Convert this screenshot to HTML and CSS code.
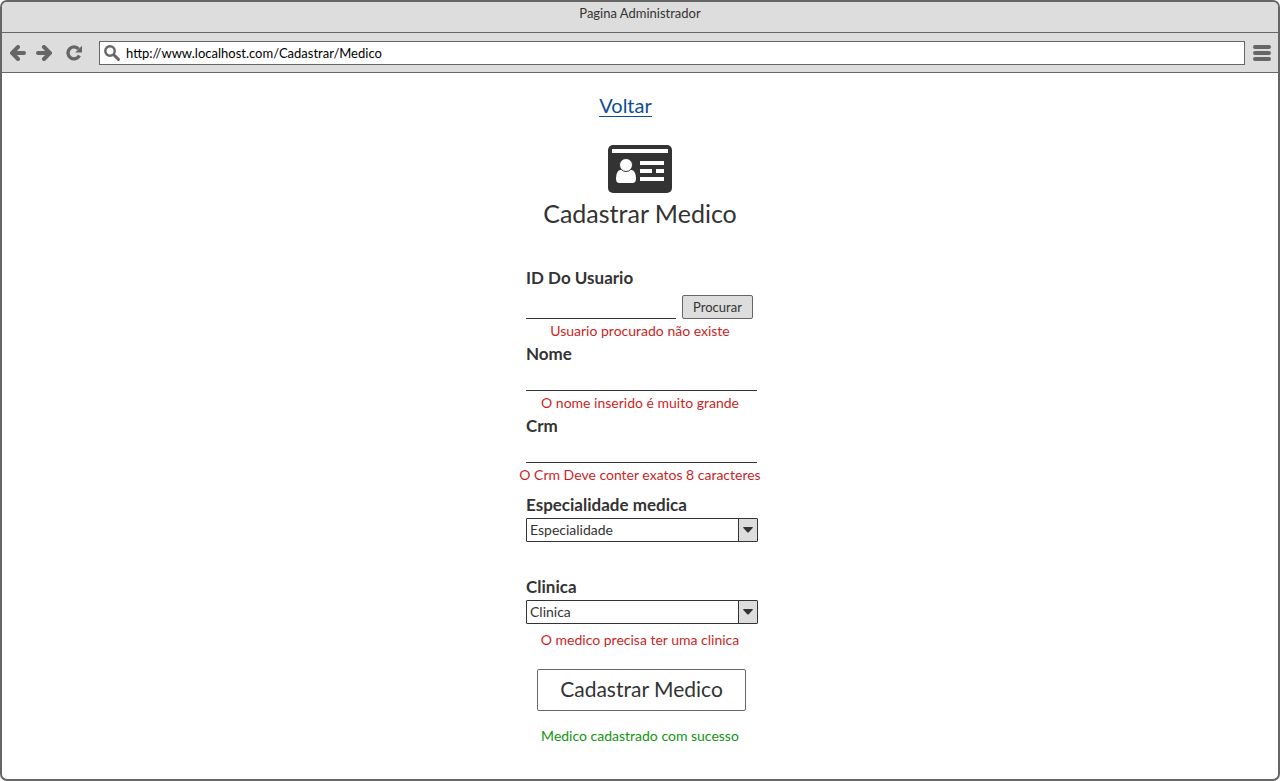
FILE: index.html
```html
<!DOCTYPE html>
<html lang="pt-BR">
<head>
<meta charset="utf-8">
<title>Pagina Administrador</title>
<link rel="stylesheet" href="styles.css">
</head>
<body>
<div class="window">
  <header class="titlebar">Pagina Administrador</header>
  <div class="toolbar">
    <button class="tool" type="button" aria-label="Voltar página"><svg width="16" height="16" viewBox="0 0 16 16"><path d="M8 2 2 8l6 6M3 8h11" fill="none" stroke="currentColor" stroke-width="4" stroke-linecap="round"/></svg></button>
    <button class="tool" type="button" aria-label="Avançar página"><svg width="16" height="16" viewBox="0 0 16 16"><path d="m8 2 6 6-6 6M13 8H2" fill="none" stroke="currentColor" stroke-width="4" stroke-linecap="round"/></svg></button>
    <button class="tool reload" type="button" aria-label="Recarregar"><svg width="16" height="16" viewBox="0 0 16 16"><path d="M12.6 4A6 6 0 1 0 13.4 10.6" fill="none" stroke="currentColor" stroke-width="3.4"/><path d="M16 .8v6.700H9.200z" fill="currentColor"/></svg></button>
    <div class="address">
      <svg width="16" height="16" viewBox="0 0 16 16" aria-hidden="true"><circle cx="6" cy="6" r="4.7" fill="none" stroke="currentColor" stroke-width="2.4"/><path d="m10 10 4.4 4.4" stroke="currentColor" stroke-width="3" stroke-linecap="round"/></svg>
      <input class="url" type="text" aria-label="Endereço" value="http://www.localhost.com/Cadastrar/Medico">
    </div>
    <button class="tool menu" type="button" aria-label="Menu"><svg width="18" height="16" viewBox="0 0 18 16"><path d="M2 2h14M2 8h14M2 14h14" stroke="currentColor" stroke-width="4" stroke-linecap="round"/></svg></button>
  </div>
  <main class="page">
    <a class="back" href="#">Voltar</a>
    <svg class="card-icon" width="64" height="48" viewBox="0 0 64 48" aria-hidden="true">
      <rect width="64" height="48" rx="5" fill="#333"/>
      <path d="M4 4h56v4H4zM32 16h24v4H32zM32 24h12v4H32zM48 24h8v4h-8zM32 32h24v4H32z" fill="#fff"/>
      <path d="M12.500 25C9.500 25 8 29.500 8 34c0 2.600 1.300 4 3.500 4h13c2.200 0 3.500-1.400 3.500-4 0-4.500-1.500-9-4.500-9z" fill="#fff"/>
      <circle cx="18" cy="20" r="6.500" fill="#fff" stroke="#333" stroke-width="1"/>
    </svg>
    <h1 class="title">Cadastrar Medico</h1>
    <form class="form">
      <label class="label" for="id">ID Do Usuario</label>
      <div class="search">
        <input class="line" id="id" type="text">
        <button class="find" type="button">Procurar</button>
      </div>
      <p class="message">Usuario procurado não existe</p>
      <label class="label" for="nome">Nome</label>
      <input class="line" id="nome" type="text">
      <p class="message">O nome inserido é muito grande</p>
      <label class="label" for="crm">Crm</label>
      <input class="line" id="crm" type="text">
      <p class="message">O Crm Deve conter exatos 8 caracteres</p>
      <label class="label first-choice" for="esp">Especialidade medica</label>
      <div class="choice">
        <select class="select" id="esp"><option>Especialidade</option></select>
        <span class="arrow"><svg width="10" height="6" viewBox="0 0 10 6"><path d="M.7 0h8.600q1 0 .3.900L6 5q-1 1-2 0L.4.900Q-.3 0 .7 0z" fill="currentColor"/></svg></span>
      </div>
      <label class="label next-choice" for="clinica">Clinica</label>
      <div class="choice">
        <select class="select" id="clinica"><option>Clinica</option></select>
        <span class="arrow"><svg width="10" height="6" viewBox="0 0 10 6"><path d="M.7 0h8.600q1 0 .3.900L6 5q-1 1-2 0L.4.900Q-.3 0 .7 0z" fill="currentColor"/></svg></span>
      </div>
      <p class="message spaced">O medico precisa ter uma clinica</p>
      <button class="submit" type="button">Cadastrar Medico</button>
      <p class="message success">Medico cadastrado com sucesso</p>
    </form>
  </main>
</div>
</body>
</html>
```
FILE: styles.css
```css
* { box-sizing: border-box; }
body { margin: 0; background: #fff; color: #333; font: 13px/24px Lato, "Open Sans", sans-serif; }
button, input, select { font: inherit; color: inherit; margin: 0; padding: 0; }
svg { display: block; }
.window { min-height: 100vh; border: 2px solid #666; border-radius: 7px; overflow: hidden; display: flex; flex-direction: column; }
.titlebar { height: 31px; background: #ddd; border-bottom: 1px solid #666; text-align: center; line-height: 22px; }
.toolbar { display: flex; align-items: center; gap: 10px; height: 40px; padding: 0 7px 0 8px; background: #ddd; border-bottom: 1px solid #666; color: #666; }
.tool { border: 0; background: none; color: #666; }
.reload { margin: 0 7px 0 4px; }
.menu { margin-left: -2px; }
.address { flex: 1; display: flex; align-items: center; gap: 6px; height: 24px; padding-left: 4px; border: 1px solid #666; background: #fff; }
.url { flex: 1; min-width: 0; height: 22px; border: 0; outline: 0; color: #000; }
.page { display: flex; flex-direction: column; align-items: center; padding: 22px 0 30px; }
.back { margin-right: 29px; border-bottom: 1px solid #0d4f92; color: #0d4f92; font-size: 20px; line-height: 21px; text-decoration: none; }
.card-icon { margin-top: 28px; }
.title { margin: 6px 0 0; font-size: 25px; line-height: 28px; font-weight: 400; }
.form { display: flex; flex-direction: column; width: 240px; margin-top: 40px; }
.label { margin: 0 0 2px 6px; font-size: 17px; line-height: 22px; font-weight: 700; }
.line { height: 24px; margin: 0 3px 0 6px; border: 0; border-bottom: 1px solid #333; outline: 0; background: none; }
.search { display: flex; gap: 6px; margin: 4px 7px 0 6px; }
.search .line { flex: 1; min-width: 0; margin: 0; }
.find { width: 71px; border: 1px solid #666; border-radius: 2px; background: #ddd; line-height: 20px; }
.message { margin: 0 -4px; text-align: center; white-space: nowrap; font-size: 14px; color: #cc1f1f; }
.first-choice { margin-top: 7px; }
.next-choice { margin-top: 34px; }
.choice { position: relative; height: 24px; margin: 0 2px 0 6px; }
.select { display: block; appearance: none; width: 100%; height: 24px; padding: 0 22px 0 3px; border: 1px solid #333; border-radius: 1px; background: #fff; font-size: 14px; line-height: 22px; }
.arrow { position: absolute; top: 1px; right: 1px; bottom: 1px; width: 19px; display: flex; align-items: center; justify-content: center; border-left: 1px solid #333; background: #ddd; pointer-events: none; }
.spaced { margin-top: 4px; }
.submit { height: 42px; margin: 17px 14px 0 17px; padding-bottom: 2px; border: 1px solid #666; border-radius: 2px; background: #fff; font-size: 21px; }
.success { margin-top: 13px; color: #109410; }
```
